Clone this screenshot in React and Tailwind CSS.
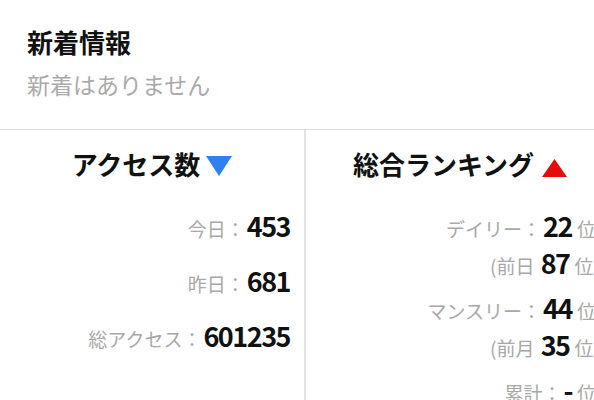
const FONT = "font-['Noto_Sans_CJK_JP','Noto_Sans',sans-serif]";

function Down() {
  return (
    <svg width="26" height="20" viewBox="0 0 26 20" className="inline-block ml-[6px] align-[-1px]">
      <polygon points="0,0 26,0 13,20" fill="#2f80f5" />
    </svg>
  );
}

function Up() {
  return (
    <svg width="25" height="18" viewBox="0 0 25 18" className="inline-block ml-[8px] align-[-2px]">
      <polygon points="12.5,0 25,18 0,18" fill="#e30b0b" />
    </svg>
  );
}

function Stat({ label, value }) {
  return (
    <div className="h-[36px] leading-[36px] text-right whitespace-nowrap">
      <span className="text-[19px] leading-none text-[#a8a8a8]">{label}：</span>
      <span className="text-[27px] leading-none font-bold tracking-[-1.5px] text-[#111] ml-[2px]">{value}</span>
    </div>
  );
}

function RankLine({ pre, value, post, tail = true }) {
  return (
    <div className={`h-[37px] leading-[37px] text-right whitespace-nowrap ${tail ? "" : "pr-[4px]"}`}>
      <span className="text-[19px] leading-none text-[#a8a8a8]">{pre}</span>
      <span className="text-[27px] leading-none font-bold tracking-[-1.5px] text-[#111] ml-[2px]">{value}</span>
      <span className="text-[19px] leading-none text-[#a8a8a8] ml-[5px]">{post}</span>
    </div>
  );
}

export default function App() {
  return (
    <div className={`w-[594px] h-[400px] overflow-hidden bg-white ${FONT}`}>
      <div className="w-[616px]">
        <div className="h-[130px] border-b border-[#dcdcdc] pl-[27px] pt-6">
          <h2 className="text-[26px] font-bold leading-[36px] text-[#111]">新着情報</h2>
          <p className="mt-[8px] text-[23px] leading-[32px] text-[#aaaaaa]">新着はありません</p>
        </div>

        <div className="flex h-[270px]">
          {/* Access */}
          <div className="w-[306px] border-r-2 border-[#e3e3e3] pr-[14px]">
            <h3 className="pt-4 text-center pl-[14px] text-[26px] font-bold leading-[36px] text-[#111] whitespace-nowrap">
              アクセス数<Down />
            </h3>
            <div className="mt-[30px] flex flex-col gap-[19px]">
              <Stat label="今日" value="453" />
              <Stat label="昨日" value="681" />
              <Stat label="総アクセス" value="601235" />
            </div>
          </div>

          {/* Ranking */}
          <div className="w-[310px] pr-[16px]">
            <h3 className="pt-4 text-center pl-[14px] text-[26px] font-bold leading-[36px] text-[#111] whitespace-nowrap">
              総合ランキング<Up />
            </h3>
            <div className="mt-[30px] flex flex-col gap-[8px]">
              <div>
                <RankLine pre="デイリー：" value="22" post="位" tail={false} />
                <RankLine pre="(前日 " value="87" post="位)" />
              </div>
              <div>
                <RankLine pre="マンスリー：" value="44" post="位" tail={false} />
                <RankLine pre="(前月 " value="35" post="位)" />
              </div>
              <div>
                <RankLine pre="累計：" value="-" post="位" tail={false} />
              </div>
            </div>
          </div>
        </div>
      </div>
    </div>
  );
}
